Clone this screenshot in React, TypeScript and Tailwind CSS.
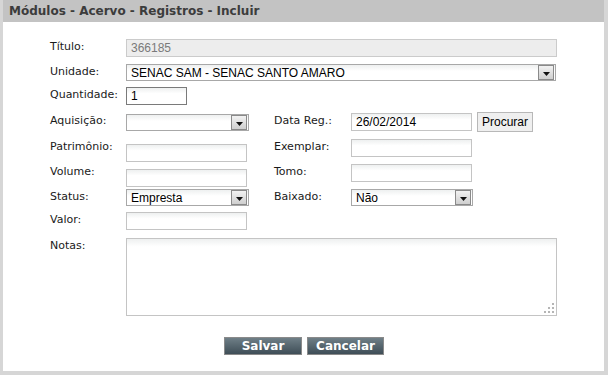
import React from 'react';

const LABEL = "w-[76px] shrink-0 pt-[1px] text-[11px] leading-[13px] text-[#1a1a1a] font-['DejaVu_Sans',Verdana,sans-serif]";
const LABEL2 = "w-[77px] shrink-0 pt-[1px] text-[11px] leading-[13px] text-[#1a1a1a] font-['DejaVu_Sans',Verdana,sans-serif]";
const FIELD = "h-[18px] border border-[#c4c4c4] bg-gradient-to-b from-[#eef0f0] to-white to-[35%] px-[4px] text-[12px] leading-[16px] text-black font-['Liberation_Sans',Arial,sans-serif] outline-none";

const Arrow = () => (
  <div className="flex h-[15px] w-[16px] items-center justify-center border border-[#8a8a8a] bg-gradient-to-b from-[#f2f2f2] to-[#cfcfcf]">
    <svg width="7" height="4" viewBox="0 0 7 4" className="mt-[2px]">
      <polygon points="0,0 7,0 3.5,4" fill="#111" />
    </svg>
  </div>
);

const Select = ({ value, w }: { value: string; w: string }) => (
  <div className={`${w} flex h-[17px] items-center justify-between border border-[#a8a8a8] bg-gradient-to-b from-[#eef0f0] to-white to-[40%] pl-[4px] pr-[1px]`}>
    <span className="pt-[1px] text-[12px] leading-[15px] text-black font-['Liberation_Sans',Arial,sans-serif]">{value}</span>
    <Arrow />
  </div>
);

const Input = ({ value = '', w, className = '' }: { value?: string; w: string; className?: string }) => (
  <input readOnly value={value} className={`${FIELD} ${w} ${className}`} />
);

export default function App() {
  return (
    <div className="h-[375px] w-[608px] bg-[#d6d6d6] pl-[3px] pr-[4px] pb-[4px]">
      <div className="h-full bg-white">
        <div className="flex h-[22px] items-center bg-[#c3c3c3] pl-[6px] text-[12px] font-bold text-[#3c3c3c] font-['DejaVu_Sans',Verdana,sans-serif]">
          Módulos - Acervo - Registros - Incluir
        </div>

        <div className="flex flex-col pl-[47px] pt-[17px]">
          <div className="flex h-[25px] items-start">
            <div className={LABEL}>Título:</div>
            <input readOnly value="366185" className="h-[18px] w-[431px] border border-[#cbcbcb] bg-[#ededed] px-[4px] text-[12px] leading-[16px] text-[#7a7a7a] font-['Liberation_Sans',Arial,sans-serif] outline-none" />
          </div>

          <div className="flex h-[23px] items-start">
            <div className={LABEL}>Unidade:</div>
            <Select value="SENAC SAM - SENAC SANTO AMARO" w="w-[430px]" />
          </div>

          <div className="flex h-[25px] items-start">
            <div className={LABEL}>Quantidade:</div>
            <Input value="1" w="w-[61px]" className="!border-[#7a7a7a] !bg-white" />
          </div>

          <div className="flex h-[27px] items-start">
            <div className="w-[76px] shrink-0 pt-[2px] text-[11px] leading-[13px] text-[#1a1a1a] font-['DejaVu_Sans',Verdana,sans-serif]">Aquisição:</div>
            <div className="w-[148px] shrink-0 pt-[2px]">
              <Select value="" w="w-[123px]" />
            </div>
            <div className="w-[77px] shrink-0 pt-[2px] text-[11px] leading-[13px] text-[#1a1a1a] font-['DejaVu_Sans',Verdana,sans-serif]">Data Reg.:</div>
            <div className="flex items-start gap-[5px] pt-[1px]">
              <Input value="26/02/2014" w="w-[121px]" />
              <button className="-mt-[1px] h-[20px] w-[56px] border border-[#b8b8b8] bg-[#efefef] text-[12px] leading-[16px] text-black font-['Liberation_Sans',Arial,sans-serif]">
                Procurar
              </button>
            </div>
          </div>

          <div className="flex h-[25px] items-start">
            <div className={LABEL}>Patrimônio:</div>
            <div className="w-[148px] shrink-0"><Input w="w-[121px]" /></div>
            <div className={LABEL2}>Exemplar:</div>
            <Input w="w-[121px]" />
          </div>

          <div className="flex h-[25px] items-start">
            <div className={LABEL}>Volume:</div>
            <div className="w-[148px] shrink-0"><Input w="w-[121px]" /></div>
            <div className={LABEL2}>Tomo:</div>
            <Input w="w-[121px]" />
          </div>

          <div className="flex h-[23px] items-start">
            <div className={LABEL}>Status:</div>
            <div className="w-[148px] shrink-0"><Select value="Empresta" w="w-[123px]" /></div>
            <div className={LABEL2}>Baixado:</div>
            <Select value="Não" w="w-[122px]" />
          </div>

          <div className="flex h-[26px] items-start">
            <div className={LABEL}>Valor:</div>
            <Input w="w-[121px]" />
          </div>

          <div className="flex items-start">
            <div className={LABEL}>Notas:</div>
            <div className="relative h-[78px] w-[431px] border border-[#c4c4c4] bg-gradient-to-b from-[#eef0f0] to-white to-[10%]">
              <svg width="10" height="10" viewBox="0 0 10 10" className="absolute bottom-[2px] right-[2px]">
                <rect x="8" y="0" width="2" height="2" fill="#b5b5b5" />
                <rect x="4" y="4" width="2" height="2" fill="#b5b5b5" />
                <rect x="8" y="4" width="2" height="2" fill="#b5b5b5" />
                <rect x="0" y="8" width="2" height="2" fill="#b5b5b5" />
                <rect x="4" y="8" width="2" height="2" fill="#b5b5b5" />
                <rect x="8" y="8" width="2" height="2" fill="#b5b5b5" />
              </svg>
            </div>
          </div>

          <div className="flex justify-start gap-[5px] pl-[174px] pt-[21px]">
            <button className="h-[18px] w-[78px] border border-[#8a8a8a] bg-gradient-to-b from-[#6f7f87] to-[#3f4e57] text-[12px] font-bold leading-[16px] text-white font-['DejaVu_Sans',Verdana,sans-serif]">
              Salvar
            </button>
            <button className="h-[18px] w-[77px] border border-[#8a8a8a] bg-gradient-to-b from-[#6f7f87] to-[#3f4e57] text-[12px] font-bold leading-[16px] text-white font-['DejaVu_Sans',Verdana,sans-serif]">
              Cancelar
            </button>
          </div>
        </div>
      </div>
    </div>
  );
}
